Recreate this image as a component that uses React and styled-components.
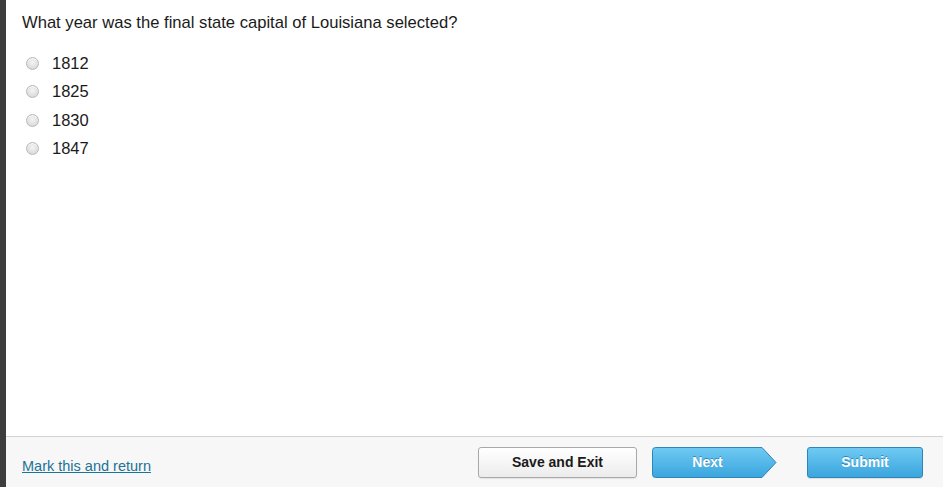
import React from 'react';
import styled, { createGlobalStyle } from 'styled-components';

const GlobalStyle = createGlobalStyle`
  html, body {
    margin: 0;
    padding: 0;
    height: 100%;
    background: #ffffff;
  }
  #root {
    height: 100%;
  }
`;

const Page = styled.div`
  display: flex;
  height: 487px;
  width: 943px;
  font-family: "Liberation Sans", Arial, sans-serif;
  color: #1a1a1a;
`;

const SideBar = styled.div`
  width: 6px;
  flex-shrink: 0;
  background: #3d3d3d;
`;

const Main = styled.div`
  flex: 1;
  display: flex;
  flex-direction: column;
`;

const Content = styled.div`
  flex: 1;
  padding: 13px 0 0 16px;
`;

const Question = styled.div`
  font-size: 16.6px;
  line-height: 20px;
  margin-bottom: 20px;
`;

const Options = styled.div`
  display: flex;
  flex-direction: column;
  gap: 8.6px;
`;

const Option = styled.label`
  display: flex;
  align-items: center;
  height: 20px;
  font-size: 16.5px;
`;

const Radio = styled.span`
  width: 11px;
  height: 11px;
  margin-left: 4px;
  margin-right: 13px;
  border-radius: 50%;
  border: 1px solid #b8b8b8;
  background: radial-gradient(circle at 50% 40%, #f4f4f4 0%, #dcdcdc 70%, #cfcfcf 100%);
  box-shadow: inset 0 1px 1px rgba(255, 255, 255, 0.8);
`;

const Footer = styled.div`
  height: 50px;
  border-top: 1px solid #d3d3d3;
  background: #f7f7f7;
  display: flex;
  align-items: center;
  padding: 0 0 0 16px;
`;

const MarkLink = styled.a`
  font-size: 14.5px;
  color: #1b7396;
  text-decoration: underline;
  margin-top: 8px;
  cursor: pointer;
`;

const Buttons = styled.div`
  margin-left: auto;
  display: flex;
  align-items: center;
  margin-right: 20px;
`;

const GreyButton = styled.button`
  width: 159px;
  height: 31px;
  border: 1px solid #a9a9a9;
  border-radius: 3px;
  background: linear-gradient(#ffffff, #ececec);
  font-family: "Liberation Sans", Arial, sans-serif;
  font-weight: bold;
  font-size: 14px;
  color: #1a1a1a;
  box-shadow: 0 1px 1px rgba(0, 0, 0, 0.08);
`;

const BlueButton = styled.button`
  width: ${(p) => p.$width}px;
  height: 31px;
  margin-left: ${(p) => p.$gap}px;
  border: 1px solid #2e86b8;
  border-radius: 3px;
  background: linear-gradient(#6fcaf2, #3aa5de);
  font-family: "Liberation Sans", Arial, sans-serif;
  font-weight: bold;
  font-size: 14px;
  color: #ffffff;
  text-shadow: 0 -1px 0 rgba(0, 60, 110, 0.45);
  box-shadow: 0 1px 1px rgba(0, 0, 0, 0.1);
`;

const ArrowWrap = styled.div`
  position: relative;
  margin-left: 15px;
  width: 125px;
  height: 31px;
`;

const ArrowSvg = styled.svg`
  position: absolute;
  inset: 0;
`;

const ArrowLabel = styled.span`
  position: absolute;
  left: 0;
  top: 0;
  width: 111px;
  height: 31px;
  display: flex;
  align-items: center;
  justify-content: center;
  font-weight: bold;
  font-size: 14px;
  color: #ffffff;
  text-shadow: 0 -1px 0 rgba(0, 60, 110, 0.45);
`;

const NextButton = () => (
  <ArrowWrap>
    <ArrowSvg width="125" height="31" viewBox="0 0 125 31">
      <defs>
        <linearGradient id="nextGrad" x1="0" y1="0" x2="0" y2="1">
          <stop offset="0" stopColor="#6fcaf2" />
          <stop offset="1" stopColor="#3aa5de" />
        </linearGradient>
      </defs>
      <path
        d="M3.5 0.5 H110 L124 15.5 L110 30.5 H3.5 Q0.5 30.5 0.5 27.5 V3.5 Q0.5 0.5 3.5 0.5 Z"
        fill="url(#nextGrad)"
        stroke="#2e86b8"
        strokeWidth="1"
      />
    </ArrowSvg>
    <ArrowLabel>Next</ArrowLabel>
  </ArrowWrap>
);

const answers = ['1812', '1825', '1830', '1847'];

const App = () => (
  <>
    <GlobalStyle />
    <Page>
      <SideBar />
      <Main>
        <Content>
          <Question>What year was the final state capital of Louisiana selected?</Question>
          <Options>
            {answers.map((a) => (
              <Option key={a}>
                <Radio />
                {a}
              </Option>
            ))}
          </Options>
        </Content>
        <Footer>
          <MarkLink>Mark this and return</MarkLink>
          <Buttons>
            <GreyButton>Save and Exit</GreyButton>
            <NextButton />
            <BlueButton $width={116} $gap={30}>Submit</BlueButton>
          </Buttons>
        </Footer>
      </Main>
    </Page>
  </>
);

export default App;
